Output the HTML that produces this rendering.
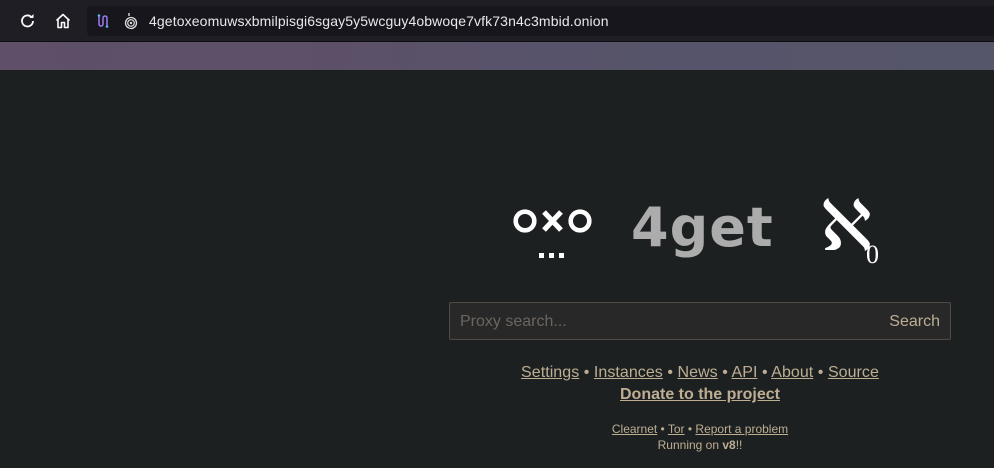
<!DOCTYPE html>
<html><head><meta charset="utf-8"><style>
*{margin:0;padding:0;box-sizing:border-box}
body{width:994px;height:468px;overflow:hidden;background:#1d2021;font-family:"Liberation Sans",sans-serif;position:relative}
#bar{position:absolute;left:0;top:0;width:994px;height:41px;background:#1f1e25}
#url{position:absolute;left:87px;top:6px;width:907px;height:30px;background:#17161c;border-radius:4px 0 0 4px}
#url span{position:absolute;left:62px;top:7px;color:#e8e8ec;font-size:14px;letter-spacing:0.12px}
#line{position:absolute;top:41px;left:0;width:994px;height:1px;background:#0d0d10}
#band{position:absolute;top:42px;left:0;width:994px;height:28px;background:linear-gradient(90deg,#5f4f69 0%,#5d5068 30%,#57536a 55%,#55566a 100%)}
#page{position:absolute;top:70px;left:0;width:994px;height:398px;background:#1d2021;border-radius:6px 0 0 0}
.c{position:absolute;left:449px;width:502px;text-align:center}
a{color:#bdae93;text-decoration:underline}
</style></head><body>
<div id="bar">
<svg style="position:absolute;left:19px;top:12px" width="18" height="18" viewBox="0 0 18 18"><path d="M14 9a5.5 5.5 0 1 1-1.8-4.1" fill="none" stroke="#fbfbfe" stroke-width="1.8"/><path d="M14.5 2v4h-4z" fill="#fbfbfe"/></svg>
<svg style="position:absolute;left:54px;top:12px" width="18" height="18" viewBox="0 0 18 18"><path d="M2.5 8.5L9 2.5l6.5 6M4 7.5v8h3.5v-5h3v5H14v-8" fill="none" stroke="#fbfbfe" stroke-width="1.6" stroke-linejoin="round"/></svg>
<div id="url">
<svg style="position:absolute;left:8px;top:7px" width="16" height="16" viewBox="0 0 16 16"><path d="M4 2v9a2 2 0 0 0 4 0V5a2 2 0 0 1 4 0v9" fill="none" stroke="#9a7cf0" stroke-width="1.5"/><circle cx="4" cy="2.5" r="1.3" fill="#5fb0f0"/><circle cx="12" cy="13.5" r="1.3" fill="#5fb0f0"/></svg>
<svg style="position:absolute;left:36px;top:6px" width="16" height="18" viewBox="0 0 16 18"><path d="M6 1v3" stroke="#ddd" stroke-width="1.4"/><circle cx="8" cy="11" r="5.5" fill="none" stroke="#ddd" stroke-width="1.3"/><circle cx="8" cy="11" r="3.3" fill="none" stroke="#ddd" stroke-width="1.2"/><circle cx="8" cy="11" r="1.2" fill="#ddd"/></svg>
<span>4getoxeomuwsxbmilpisgi6sgay5y5wcguy4obwoqe7vfk73n4c3mbid.onion</span>
</div></div>
<div id="line"></div>
<div id="band"></div>
<div id="page"></div>
<svg style="position:absolute;left:513px;top:209px" width="80" height="24" viewBox="0 0 80 24"><circle cx="12" cy="12" r="9.3" fill="none" stroke="#fff" stroke-width="4.6"/><path d="M31 3l17 18M48 3L31 21" stroke="#fff" stroke-width="5.2"/><circle cx="67" cy="12" r="9.3" fill="none" stroke="#fff" stroke-width="4.6"/></svg>
<div style="position:absolute;left:539px;top:253px;width:25px;height:5px;background:repeating-linear-gradient(90deg,#fff 0 5px,transparent 5px 10px)"></div>
<div style="position:absolute;left:631px;top:198px;color:#d0d0d0;font-size:54px;font-family:'DejaVu Sans',sans-serif;font-weight:bold;letter-spacing:1px;line-height:60px;opacity:.8">4get</div>
<div style="position:absolute;left:820px;top:188px;color:#fff;font-size:70px;font-family:'Liberation Serif',serif;line-height:80px">ℵ</div>
<div style="position:absolute;left:866px;top:240px;color:#fff;font-size:26px;font-family:'Liberation Serif',serif">0</div>
<div style="position:absolute;left:449px;top:302px;width:502px;height:38px;background:#282828;border:1px solid #504945;border-radius:2px">
<span style="position:absolute;left:10px;top:10px;color:#6b6560;font-size:16px">Proxy search...</span>
<span style="position:absolute;right:10px;top:10px;color:#bdae93;font-size:16px">Search</span></div>
<div class="c" style="top:363px;font-size:16px;color:#bdae93;line-height:20px;letter-spacing:0.05px"><a>Settings</a> • <a>Instances</a> • <a>News</a> • <a>API</a> • <a>About</a> • <a>Source</a></div>
<div class="c" style="top:385px;font-size:16px;font-weight:bold;line-height:20px"><a>Donate to the project</a></div>
<div class="c" style="top:422px;font-size:12px;color:#bdae93;line-height:15px"><a>Clearnet</a> • <a>Tor</a> • <a>Report a problem</a></div>
<div class="c" style="top:438px;font-size:12px;color:#bdae93;line-height:15px">Running on <b>v8</b>!!</div>
</body></html>
